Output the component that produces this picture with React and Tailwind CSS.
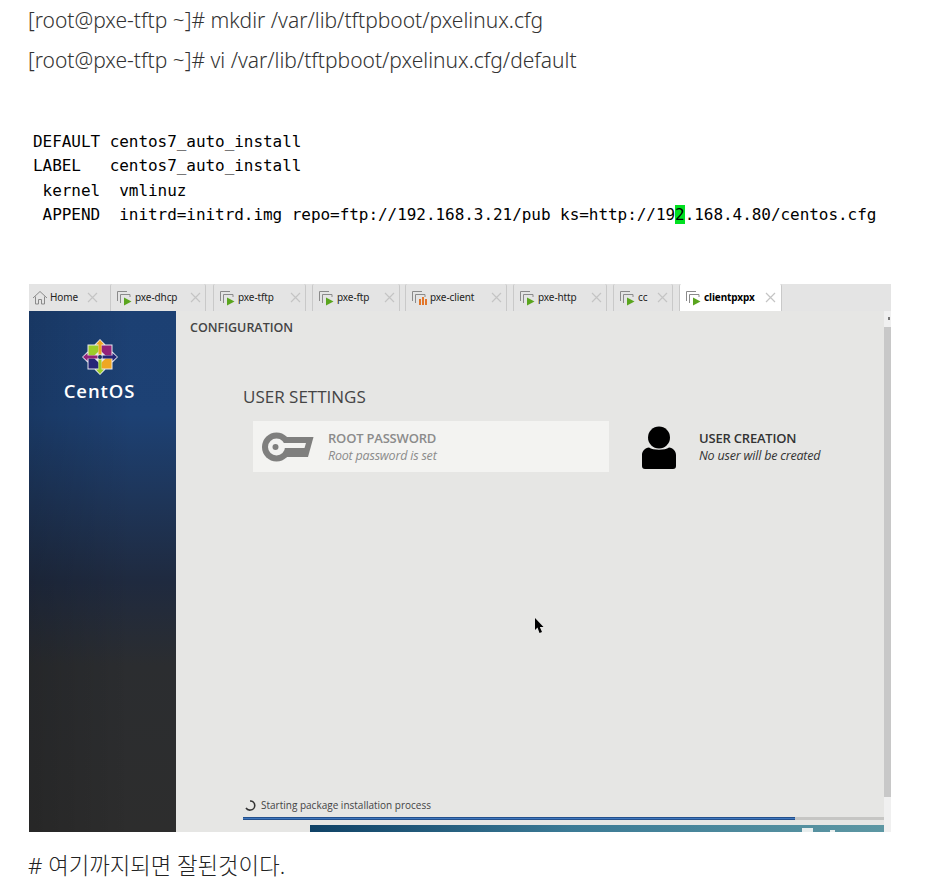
const VmIcon = ({ orange }) => (
  <svg width="17" height="16" viewBox="0 0 17 16" className="shrink-0">
    <path d="M1.5 11V1.5H11" fill="none" stroke="#8a8a8a" />
    <path d="M4.5 13V4.5H14V7" fill="none" stroke="#8a8a8a" />
    {orange ? (
      <g fill="#e2762b">
        <rect x="8" y="9" width="2" height="6" />
        <rect x="11" y="7" width="2" height="8" />
        <rect x="14" y="9" width="2" height="6" />
      </g>
    ) : (
      <path d="M8 7.5 15.5 11.5 8 15.5Z" fill="#5aa51e" />
    )}
  </svg>
);

const HomeIcon = () => (
  <svg width="16" height="15" viewBox="0 0 16 15" fill="none" stroke="#8a8a8a" className="shrink-0">
    <path d="M1 8 8 1.5 15 8" />
    <path d="M3.5 6.5V14H6.5V9.5H9.5V14H12.5V6.5" />
  </svg>
);

const CloseIcon = () => (
  <svg width="11" height="11" viewBox="0 0 11 11" stroke="#c4c4c4" strokeWidth="1.2" className="shrink-0 ml-auto">
    <path d="M1 1 10 10M10 1 1 10" />
  </svg>
);

const tabs = [
  { label: "Home", w: "w-[78px] pr-[9px]", home: true },
  { label: "pxe-dhcp", w: "w-[96px] ml-[3px] pr-[4px]" },
  { label: "pxe-tftp", w: "w-[93px] ml-[7px] pr-[4px]" },
  { label: "pxe-ftp", w: "w-[88px] ml-[6px] pr-[4px]" },
  { label: "pxe-client", w: "w-[102px] ml-[5px] pr-[4px]", orange: true },
  { label: "pxe-http", w: "w-[94px] ml-[6px] pr-[4px]" },
  { label: "cc", w: "w-[60px] ml-[6px] pr-[4px]" },
  { label: "clientpxpx", w: "w-[103px] ml-[6px] pr-[5px]", active: true },
];

const Tab = ({ t }) => (
  <div
    className={`${t.w} h-full flex items-center gap-[2px] ${t.home ? "pl-[3px]" : "pl-[5px] border-l border-r border-[#c9c9c9] rounded-t-[2px]"} ${t.active ? "bg-white font-bold text-black" : "text-[#222]"}`}
  >
    {t.home ? <HomeIcon /> : <VmIcon orange={t.orange} />}
    <span className="text-[10px] tracking-[-0.1px]">{t.label}</span>
    <CloseIcon />
  </div>
);

const CentosLogo = () => (
  <svg width="38" height="38" viewBox="-19 -19 38 38" className="shrink-0">
    <path d="M0 -18 5.5 -12.5H12.5V-5.5L18 0 12.5 5.5V12.5H5.5L0 18-5.5 12.5H-12.5V5.5L-18 0-12.5-5.5V-12.5H-5.5Z" fill="#e8e8ee" />
    <rect x="-11.5" y="-11.5" width="10" height="10" fill="#9ccd2a" />
    <rect x="1.5" y="-11.5" width="10" height="10" fill="#932279" />
    <rect x="-11.5" y="1.5" width="10" height="10" fill="#262577" />
    <rect x="1.5" y="1.5" width="10" height="10" fill="#efa724" />
    <path d="M-5 -5H5V5H-5Z" fill="#e8e8ee" transform="rotate(45)" />
    <path d="M0 -17 4 -12.5H1.5V-2.5H-1.5V-12.5H-4Z" fill="#efa724" />
    <path d="M17 0 12.5 4V1.5H2.5V-1.5H12.5V-4Z" fill="#262577" />
    <path d="M0 17 4 12.5H1.5V2.5H-1.5V12.5H-4Z" fill="#9ccd2a" />
    <path d="M-17 0-12.5 4V1.5H-2.5V-1.5H-12.5V-4Z" fill="#932279" />
    <circle r="2" fill="#16335f" />
  </svg>
);

const KeyIcon = () => (
  <svg width="52" height="30" viewBox="0 0 52 30" className="shrink-0">
    <circle cx="14.5" cy="15" r="14.5" fill="#7f7f7e" />
    <path d="M24 5H51.5L46 25H24Z" fill="#7f7f7e" />
    <circle cx="14.5" cy="15" r="8.5" fill="#f3f3f1" />
    <path d="M20 11H44L42.5 16H20Z" fill="#f3f3f1" />
    <circle cx="13.5" cy="15" r="3" fill="#7f7f7e" />
  </svg>
);

const UserIcon = () => (
  <svg width="34" height="43" viewBox="0 0 34 43" className="shrink-0 mt-[2px]">
    <circle cx="17" cy="11.5" r="11" fill="#000" />
    <path d="M7 21.5C11 24.5 23 24.5 27 21.5 31 22 34 25 34 29V40C34 42 33 43 31 43H3C1 43 0 42 0 40V29C0 25 3 22 7 21.5Z" fill="#000" />
  </svg>
);

const Spinner = () => (
  <svg width="11" height="11" viewBox="0 0 11 11" fill="none" className="shrink-0">
    <path d="M5 1A4.5 4.5 0 0 1 5.5 10 4.5 4.5 0 0 1 1 8" stroke="#333" strokeWidth="1.6" />
  </svg>
);

const Cursor = () => (
  <svg width="11" height="16" viewBox="0 0 11 16" className="absolute left-[358px] top-[307px]">
    <path d="M1 0V12L3.5 9.5 5.5 15 8 14 5.8 9H9.5Z" fill="#000" />
  </svg>
);

export default function App() {
  return (
    <div className="w-[941px] h-[881px] bg-white overflow-hidden text-[#222]" style={{ fontFamily: '"Noto Sans", "Noto Sans CJK KR", sans-serif' }}>
      <div className="pl-[28px] pt-[1px] text-[21px] font-light leading-[39px] text-[#333]">
        <p className="mb-[1px]">[root@pxe-tftp ~]# mkdir /var/lib/tftpboot/pxelinux.cfg</p>
        <p>[root@pxe-tftp ~]# vi /var/lib/tftpboot/pxelinux.cfg/default</p>
      </div>

      <pre className="mt-[50px] ml-[33px] text-[16px] leading-[24.3px] text-black tracking-[-0.05px] font-['DejaVu_Sans_Mono',monospace]">
        {"DEFAULT centos7_auto_install\nLABEL   centos7_auto_install\n kernel  vmlinuz\n APPEND  initrd=initrd.img repo=ftp://192.168.3.21/pub ks=http://19"}
        <span className="bg-[#00e020]">2</span>
        {".168.4.80/centos.cfg"}
      </pre>

      <div className="mt-[57px] ml-[29px] w-[862px] h-[548px] flex flex-col">
        <div className="h-[27px] shrink-0 bg-[#e4e4e4] flex items-stretch">
          {tabs.map((t) => (
            <Tab key={t.label} t={t} />
          ))}
        </div>
        <div className="flex-1 flex min-h-0">
          <aside className="w-[147px] shrink-0 flex flex-col items-center pt-[27px] pr-[6px] bg-[linear-gradient(to_right,rgba(0,0,0,0.14)_0%,rgba(0,0,0,0)_70%),linear-gradient(to_bottom,#1c4073_0%,#1d4174_20%,#1f2a3f_52%,#2b2d30_68%,#2d2d2d_100%)]">
            <CentosLogo />
            <span className="mt-[3px] text-[18.5px] font-semibold text-white leading-[24px] tracking-[0.9px]" style={{ fontFamily: '"Open Sans", sans-serif' }}>
              CentOS
            </span>
          </aside>

          <main className="relative flex-1 min-w-0 bg-[#e6e6e4] flex flex-col" style={{ fontFamily: '"Open Sans", sans-serif' }}>
            <h2 className="mt-[9px] ml-[14px] text-[12.5px] leading-[16px] font-semibold text-[#444]">CONFIGURATION</h2>
            <h3 className="mt-[51px] ml-[67px] text-[17px] leading-[20px] text-[#444]">USER SETTINGS</h3>

            <div className="mt-[14px] ml-[77px] flex items-stretch">
              <div className="w-[356px] h-[51px] bg-[#f3f3f1] flex items-center pl-[9px] gap-[14px]">
                <KeyIcon />
                <div className="text-[#8b8b8b]">
                  <div className="text-[13px] leading-[17px] font-semibold tracking-[-0.2px]">ROOT PASSWORD</div>
                  <div className="text-[12.5px] leading-[17px] italic tracking-[-0.2px]">Root password is set</div>
                </div>
              </div>
              <div className="ml-[33px] flex items-center gap-[23px]">
                <UserIcon />
                <div className="text-[#333]">
                  <div className="text-[13px] leading-[17px] font-semibold tracking-[-0.2px]">USER CREATION</div>
                  <div className="text-[12.5px] leading-[17px] italic tracking-[-0.2px]">No user will be created</div>
                </div>
              </div>
            </div>

            <div className="mt-auto ml-[67px] flex items-center gap-[5px] pl-[2px] h-[14px]">
              <Spinner />
              <span className="text-[10px] leading-[14px] text-[#444]">Starting package installation process</span>
            </div>
            <div className="mt-[5px] ml-[67px] h-[3px] bg-[#c6c6c4]">
              <div className="w-[552px] h-full bg-[#3f77bd] border-y border-y-[#24508c]" />
            </div>
            <div className="relative mt-[5px] ml-[134px] h-[7px] overflow-hidden bg-[linear-gradient(to_right,#0f4266_0%,#3b7a95_45%,#5d97a3_100%)]">
              <div className="absolute left-[492px] top-[3px] w-[11px] h-[4px] bg-[#e8eeee]" />
              <div className="absolute left-[520px] top-[5px] w-[5px] h-[2px] bg-[#e8eeee]" />
            </div>
            <Cursor />
          </main>

          <div className="relative w-[7px] shrink-0 bg-[#f0f0f0] pt-[16px]">
            <div className="absolute right-[1px] top-[6px] w-[2px] h-[3px] bg-[#777]" />
            <div className="h-[470px] bg-[#c8c8c8]" />
          </div>
        </div>
      </div>

      <p className="mt-[20px] ml-[28px] text-[22.3px] leading-[28px] font-light">{"# 여기까지되면 잘된것이다."}</p>
    </div>
  );
}
